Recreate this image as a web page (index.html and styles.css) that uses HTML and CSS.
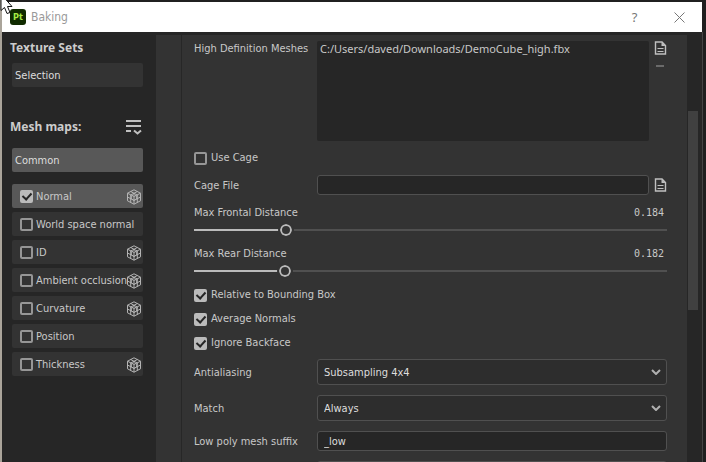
FILE: index.html
```html
<!DOCTYPE html>
<html lang="en">
<head>
<meta charset="utf-8">
<title>Baking</title>
<link rel="stylesheet" href="styles.css">
</head>
<body>
<svg class="defs" aria-hidden="true">
  <symbol id="cube" viewBox="1 0 14 16">
    <g fill="none" stroke="currentColor" stroke-width="1">
      <path d="M8 .8 14.5 4.2V11.8L8 15.2 1.5 11.8V4.2Z"/>
      <path d="M1.500 4.200 8 7.500 14.500 4.200M1.500 8 8 11.400 14.500 8M8 7.500V15.200M4.700 2.500 11.300 6V13.500M11.300 2.500 4.700 6V13.500"/>
      <path d="M8 5.500 10.500 7V10L8 11.500 5.500 10V7Z" stroke-width=".8"/>
    </g>
  </symbol>
  <symbol id="file" viewBox="0 0 12 14">
    <path d="M1 1H7.5L11 4.5V13H1Z" fill="none" stroke="currentColor" stroke-width="1.4"/>
    <path d="M7 1V5H11Z" fill="currentColor"/>
    <path d="M3 7.5H9M3 10.5H9" stroke="currentColor" stroke-width="1.2"/>
  </symbol>
</svg>
<div class="window">
  <header class="titlebar">
    <span class="logo">Pt</span>
    <h1 class="title">Baking</h1>
    <button class="title-btn" type="button" aria-label="Help">?</button>
    <button class="title-btn" type="button" aria-label="Close">
      <svg width="11" height="11" viewBox="0 0 11 11"><path d="M.5.5 10.5 10.5M10.5.5.5 10.5" stroke="currentColor" stroke-width="1"/></svg>
    </button>
  </header>
  <div class="content">
    <aside class="sidebar">
      <h2 class="heading">Texture Sets</h2>
      <button class="entry" type="button">Selection</button>
      <div class="maps-head">
        <h2 class="heading">Mesh maps:</h2>
        <button class="icon-btn" type="button" aria-label="Map options">
          <svg width="16" height="16" viewBox="0 0 16 16"><path d="M0 2H15M0 7H15M0 12H5" stroke="currentColor" stroke-width="2"/><path d="M8 11.500 11.500 14.500 15 11.500" fill="none" stroke="currentColor" stroke-width="2"/></svg>
        </button>
      </div>
      <button class="entry active" type="button">Common</button>
      <ul class="maps">
        <li class="map active"><label class="check"><input type="checkbox" checked>Normal</label><svg class="cube"><use href="#cube"/></svg></li>
        <li class="map"><label class="check"><input type="checkbox">World space normal</label></li>
        <li class="map"><label class="check"><input type="checkbox">ID</label><svg class="cube"><use href="#cube"/></svg></li>
        <li class="map"><label class="check"><input type="checkbox">Ambient occlusion</label><svg class="cube"><use href="#cube"/></svg></li>
        <li class="map"><label class="check"><input type="checkbox">Curvature</label><svg class="cube"><use href="#cube"/></svg></li>
        <li class="map"><label class="check"><input type="checkbox">Position</label></li>
        <li class="map"><label class="check"><input type="checkbox">Thickness</label><svg class="cube"><use href="#cube"/></svg></li>
      </ul>
    </aside>
    <main class="panel">
      <form class="form">
        <div class="row top">
          <label for="meshes">High Definition Meshes</label>
          <div class="with-icon top">
            <textarea id="meshes" class="meshes" spellcheck="false">C:/Users/daved/Downloads/DemoCube_high.fbx</textarea>
            <div class="tools">
              <button class="icon-btn" type="button" aria-label="Add mesh"><svg class="file"><use href="#file"/></svg></button>
              <button class="icon-btn remove" type="button" aria-label="Remove mesh"></button>
            </div>
          </div>
        </div>
        <label class="check single"><input type="checkbox">Use Cage</label>
        <div class="row">
          <label for="cage">Cage File</label>
          <div class="with-icon">
            <input id="cage" class="field" type="text">
            <button class="icon-btn" type="button" aria-label="Choose cage file"><svg class="file"><use href="#file"/></svg></button>
          </div>
        </div>
        <div class="distance">
          <label for="front">Max Frontal Distance</label><output for="front">0.184</output>
          <input id="front" type="range" min="0" max="1" step="0.001" value="0.184" style="--fill:18.4%">
        </div>
        <div class="distance">
          <label for="rear">Max Rear Distance</label><output for="rear">0.182</output>
          <input id="rear" type="range" min="0" max="1" step="0.001" value="0.182" style="--fill:18.2%">
        </div>
        <div class="checks">
          <label class="check"><input type="checkbox" checked>Relative to Bounding Box</label>
          <label class="check"><input type="checkbox" checked>Average Normals</label>
          <label class="check"><input type="checkbox" checked>Ignore Backface</label>
        </div>
        <div class="row spaced">
          <label for="aa">Antialiasing</label>
          <div class="dropdown">
            <select id="aa" class="field"><option>Subsampling 4x4</option></select>
            <svg class="chevron" viewBox="0 0 10 6"><path d="M1 1 5 5 9 1"/></svg>
          </div>
        </div>
        <div class="row spaced">
          <label for="match">Match</label>
          <div class="dropdown">
            <select id="match" class="field"><option>Always</option></select>
            <svg class="chevron" viewBox="0 0 10 6"><path d="M1 1 5 5 9 1"/></svg>
          </div>
        </div>
        <div class="row spaced">
          <label for="low">Low poly mesh suffix</label>
          <input id="low" class="field" type="text" value="_low">
        </div>
        <div class="row spaced">
          <label for="high"></label>
          <input id="high" class="field" type="text">
        </div>
      </form>
    </main>
    <div class="scrollbar"><div class="thumb"></div></div>
  </div>
</div>
<svg class="cursor" width="14" height="16" viewBox="0 0 14 16" aria-hidden="true"><path d="M1-6V10.500L4.500 7.500 7 13.500 10 12.500 7.500 6.500H12Z" fill="#fff" stroke="#111" stroke-width="1"/></svg>
</body>
</html>
```
FILE: styles.css
```css
* { box-sizing: border-box; }

body {
  margin: 0;
  height: 100vh;
  overflow: hidden;
  background: #202020;
  color: #c8c8c8;
  font: 11px/16px "DejaVu Sans Condensed", "DejaVu Sans", sans-serif;
}

h1, h2, ul { margin: 0; padding: 0; }
ul { list-style: none; }
button, input, select, textarea { margin: 0; font: inherit; color: inherit; }
button { padding: 0; border: 0; background: none; text-align: left; }
.defs { position: absolute; width: 0; height: 0; }

.window {
  display: flex;
  flex-direction: column;
  height: 100vh;
  padding-top: 2px;
  border-left: 2px solid #aaa49a;
  border-right: 3px solid #1f1f1f;
}

.titlebar {
  display: flex;
  flex: none;
  align-items: center;
  height: 30px;
  margin-right: 1px;
  padding-left: 8px;
  background: #fff;
  color: #777;
}

.logo {
  width: 16px;
  height: 16px;
  margin-right: 5px;
  border-radius: 3px;
  background: #102b00;
  color: #a4ec45;
  font-weight: bold;
  font-size: 9px;
  text-align: center;
}

.title { flex: 1; color: #999; font-size: 12px; font-weight: normal; }

.title-btn {
  display: flex;
  align-items: center;
  justify-content: center;
  width: 45px;
  height: 30px;
  font-family: "Noto Sans", sans-serif;
  font-size: 13px;
}

.content {
  display: flex;
  flex: 1;
  min-height: 0;
  border-right: 1px solid #444;
  background: #262626;
}

.sidebar { flex: none; width: 154px; padding: 7px 13px 0 8px; }
.heading { font: bold 12px/18px "Noto Sans", sans-serif; color: #ccc; }

.entry {
  display: block;
  width: 131px;
  height: 24px;
  margin: 6px 0 0 2px;
  padding: 1px 0 0 3px;
  border-radius: 2px;
  background: #333;
  color: #ddd;
}

.active { background: #585858; }
.maps-head { display: flex; align-items: center; justify-content: space-between; margin: 31px 1px 12px 0; }
.maps-head + .entry { margin-top: 0; }
.icon-btn { display: flex; color: #c0c0c0; }

.maps { display: grid; grid-template-columns: minmax(0, 1fr); gap: 4px; width: 131px; margin: 12px 0 0 2px; }
.map { display: flex; align-items: center; height: 24px; padding: 1px 2px 0 8px; border-radius: 2px; }
.map:not(.active) { background: #333; }
.map .check { flex: 1; gap: 3px; min-width: 0; }
.cube { flex: none; width: 14px; height: 16px; color: #b4b4b4; }

.check { display: flex; align-items: center; gap: 4px; white-space: nowrap; }
.check input {
  appearance: none;
  flex: none;
  width: 13px;
  height: 13px;
  border: 2px solid #969696;
  border-radius: 2px;
}
.check input:checked { display: grid; place-items: center; border-color: #bbb; background: #bbb; }
.check input:checked::before {
  content: "";
  width: 4px;
  height: 7px;
  margin-top: -2px;
  border: solid #262626;
  border-width: 0 2px 2px 0;
  transform: rotate(42deg);
}

.panel {
  flex: 1;
  min-width: 0;
  margin-top: 3px;
  padding-left: 25px;
  background: #333;
}

.form { height: 100%; padding: 6px 20px 0 12px; border-left: 1px solid #272727; overflow: hidden; }
.row { display: grid; grid-template-columns: 123px 1fr; align-items: center; }
.row > label { padding-top: 1px; }
.row.top > label { padding-top: 0; }
.top { align-items: start; }
.with-icon { display: flex; align-items: center; gap: 5px; }
.with-icon.top { align-items: start; }
.tools { display: grid; gap: 10px; }
.file { width: 13px; height: 14px; }
.remove { width: 8px; height: 2px; margin-left: 2px; background: #6a6a6a; }

.meshes {
  flex: 1;
  height: 100px;
  padding: 0 3px;
  border: 0;
  border-radius: 2px;
  background: #262626;
  font-family: "Noto Sans", sans-serif;
  resize: none;
}

.field {
  flex: 1;
  width: 100%;
  height: 20px;
  padding: 1px 6px 0;
  border: 1px solid #505050;
  border-radius: 3px;
  background: #262626;
  color: #ddd;
}

.single { margin: 9px 0; }

.distance { display: grid; grid-template-columns: 1fr auto; grid-template-rows: 17px 16px; height: 41px; padding-top: 10px; }
.distance output { padding: 0 3px 0 0; font: 10px/16px "DejaVu Sans Mono", monospace; }
.distance input {
  grid-column: 1 / 3;
  appearance: none;
  width: 100%;
  height: 16px;
  background: linear-gradient(to right, #bbb var(--fill), #505050 var(--fill)) center / 100% 2px no-repeat;
}
.distance input::-webkit-slider-thumb {
  appearance: none;
  width: 16px;
  height: 16px;
  border: 2px solid #333;
  border-radius: 50%;
  background: #333;
  box-shadow: inset 0 0 0 2px #bbb;
}

.checks { display: grid; gap: 8px; margin-top: 10px; }
.spaced { margin-top: 10px; }
.checks + .spaced { margin-top: 8px; }
.dropdown { display: grid; align-items: center; }
.dropdown > * { grid-area: 1 / 1; }
.dropdown select { appearance: none; height: 26px; background: #2d2d2d; }
.chevron { justify-self: end; width: 10px; height: 6px; margin-right: 6px; fill: none; stroke: #b0b0b0; stroke-width: 2; pointer-events: none; }

.scrollbar { flex: none; width: 15px; padding: 79px 4px 0 1px; }
.thumb { height: 199px; background: #404040; }

.cursor { position: absolute; top: 0; left: 0; }
```
